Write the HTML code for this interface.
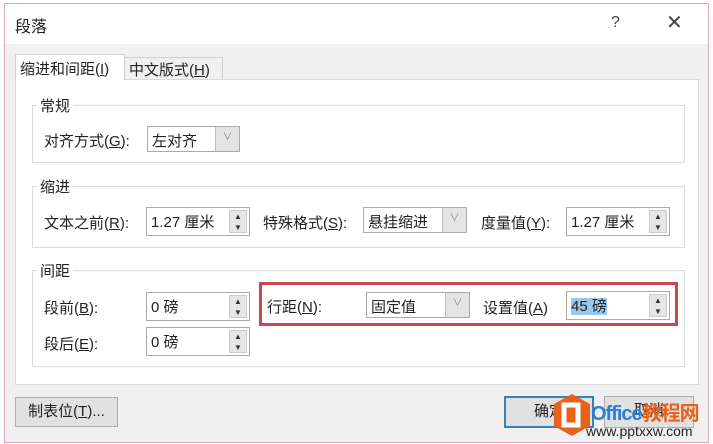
<!DOCTYPE html>
<html><head><meta charset="utf-8"><style>
*{box-sizing:border-box;margin:0;padding:0}
body{width:713px;height:444px;background:#fff;font-family:"Liberation Sans","Noto Sans CJK SC",sans-serif;font-size:15px;color:#222;position:relative;overflow:hidden}
.a{position:absolute;white-space:nowrap}
.win{left:4px;top:3px;width:705px;height:440px;border:1px solid #d9a9c6;background:#f0f0f0}
.title{left:5px;top:4px;width:703px;height:40px;background:#fff}
.tab{border:1px solid #d0d0d0;border-bottom:none;background:#f0f0f0;padding:3px 4px;font-size:15px}
.panel{left:15px;top:79px;width:684px;height:306px;background:#fff;border:1px solid #dadada}
.grp{border:1px solid #dcdcdc}
.lbl{background:#fff;padding:0 3px;font-size:15px}
.box{border:1px solid #aaa;background:#fff;padding:3px 4px;font-size:15px}
.arr{position:absolute;right:0;top:0;bottom:0;width:24px;background:#e4e4e4;border-left:1px solid #bbb;color:#888;font-size:10px;text-align:center;line-height:22px}
.spn{position:absolute;right:2px;top:2px;bottom:2px;width:18px;background:#e6e6e6;border:1px solid #ccc;font-size:8px;line-height:11px;text-align:center;color:#333}
.btn{border:1px solid #adadad;background:#e1e1e1;font-size:15px;text-align:center;line-height:28px}
u{text-decoration:underline}
</style></head><body>
<div class="a win"></div>
<div class="a title"></div>
<div class="a" style="left:15px;top:13px;font-size:16px">段落</div>
<div class="a" style="left:611px;top:14px;font-size:16px;color:#444">?</div>
<div class="a" style="left:666px;top:10px;font-size:20px;color:#444">✕</div>
<div class="a tab" style="left:15px;top:54px;width:110px;height:26px;background:#fff;z-index:2">缩进和间距(<u>I</u>)</div>
<div class="a tab" style="left:124px;top:57px;width:99px;height:22px;padding-top:1px">中文版式(<u>H</u>)</div>
<div class="a panel"></div>
<div class="a grp" style="left:32px;top:105px;width:653px;height:58px"></div>
<div class="a lbl" style="left:37px;top:95px">常规</div>
<div class="a" style="left:44px;top:130px">对齐方式(<u>G</u>):</div>
<div class="a box" style="left:147px;top:126px;width:93px;height:26px">左对齐<div class="arr">∨</div></div>

<div class="a grp" style="left:32px;top:186px;width:653px;height:62px"></div>
<div class="a lbl" style="left:37px;top:176px">缩进</div>
<div class="a" style="left:44px;top:212px">文本之前(<u>R</u>):</div>
<div class="a box" style="left:146px;top:207px;width:104px;height:29px">1.27 厘米<div class="spn">▲<br>▼</div></div>
<div class="a" style="left:263px;top:212px">特殊格式(<u>S</u>):</div>
<div class="a box" style="left:363px;top:207px;width:104px;height:26px">悬挂缩进<div class="arr">∨</div></div>
<div class="a" style="left:481px;top:212px">度量值(<u>Y</u>):</div>
<div class="a box" style="left:566px;top:207px;width:104px;height:29px">1.27 厘米<div class="spn">▲<br>▼</div></div>

<div class="a grp" style="left:32px;top:270px;width:653px;height:97px"></div>
<div class="a lbl" style="left:37px;top:260px">间距</div>
<div class="a" style="left:44px;top:297px">段前(<u>B</u>):</div>
<div class="a box" style="left:146px;top:292px;width:104px;height:29px">0 磅<div class="spn">▲<br>▼</div></div>
<div class="a" style="left:44px;top:333px">段后(<u>E</u>):</div>
<div class="a box" style="left:146px;top:327px;width:104px;height:29px">0 磅<div class="spn">▲<br>▼</div></div>
<div class="a" style="left:259px;top:282px;width:419px;height:44px;border:3px solid #c9484e"></div>
<div class="a" style="left:267px;top:296px">行距(<u>N</u>):</div>
<div class="a box" style="left:366px;top:292px;width:104px;height:26px">固定值<div class="arr">∨</div></div>
<div class="a" style="left:483px;top:297px">设置值(<u>A</u>)</div>
<div class="a box" style="left:566px;top:291px;width:104px;height:29px"><span style="background:#99c9ef">45 磅</span><div class="spn">▲<br>▼</div></div>

<div class="a btn" style="left:15px;top:397px;width:103px;height:30px">制表位(<u>T</u>)...</div>
<div class="a btn" style="left:504px;top:396px;width:90px;height:32px;border:2px solid #3c7fb1">确定</div>
<div class="a btn" style="left:604px;top:396px;width:90px;height:32px">取消</div>
<svg class="a" style="left:552px;top:392px" width="40" height="46"><polygon points="20,2 38,12 38,34 20,44 2,34 2,12" fill="#e8621c"/><rect x="12" y="13" width="14" height="20" fill="none" stroke="#fff" stroke-width="5"/></svg>
<div class="a" style="left:591px;top:397px;font-size:20px;font-weight:bold;color:#2a7fd6;letter-spacing:-1px">Office<span style="color:#e8621c">教程网</span></div>
<div class="a" style="left:586px;top:423px;font-size:14px;color:#222">www.pptxxw.com</div>
</body></html>
